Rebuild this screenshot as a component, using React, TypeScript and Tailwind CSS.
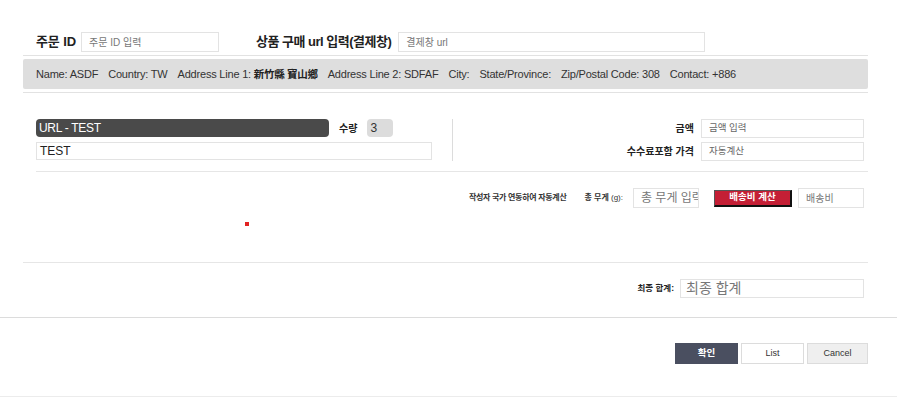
import React from "react";

function Box({ w, h, text, cls = "" }: { w: string; h: string; text?: string; cls?: string }) {
  return (
    <div className={`${w} ${h} border border-[#e3e3e3] bg-white flex items-center ${cls}`}>
      {text}
    </div>
  );
}

export default function App() {
  return (
    <div className="w-[897px] h-[400px] bg-white font-['Liberation_Sans','Noto_Sans_CJK_KR',sans-serif] text-[#222] overflow-hidden">
      <div className="pt-[32px]">
        {/* Top row */}
        <div className="flex items-center pl-[36px] h-[20px]">
          <span className="text-[13px] font-bold tracking-[-0.1px]">주문 ID</span>
          <div className="ml-[5px] w-[138px] h-[20px] border border-[#e3e3e3] flex items-center pl-[7px] text-[10px] text-[#777]">
            주문 ID 입력
          </div>
          <span className="ml-[37px] text-[13px] font-bold tracking-[-0.5px]">상품 구매 url 입력(결제창)</span>
          <div className="ml-[7px] w-[307px] h-[20px] border border-[#e3e3e3] flex items-center pl-[7px] text-[10px] text-[#777]">
            결제창 url
          </div>
        </div>

        <div className="ml-[23px] mr-[29px] mt-[3px] border-t border-[#e2e2e2]" />

        <div className="ml-[23px] mr-[29px] mt-[3px] h-[30px] bg-[#dedede] rounded-[2px] flex items-center pl-[13px] gap-[10px] text-[11px] text-[#333] tracking-[-0.2px]">
          <span>Name: ASDF</span>
          <span>Country: TW</span>
          <span>Address Line 1: <span className="font-bold text-[#222] text-[10.5px] tracking-[-0.3px]">新竹縣 寶山鄉</span></span>
          <span>Address Line 2: SDFAF</span>
          <span>City:</span>
          <span>State/Province:</span>
          <span>Zip/Postal Code: 308</span>
          <span>Contact: +886</span>
        </div>

        <div className="ml-[23px] mr-[29px] mt-[3px] border-t border-[#e2e2e2]" />

        {/* Product section */}
        <div className="ml-[36px] mr-[29px] mt-[26px] flex">
          <div className="w-[396px] flex flex-col">
            <div className="flex items-center h-[18px]">
              <div className="w-[293px] h-[18px] bg-[#4a4a4a] rounded-[4px] text-white text-[12px] flex items-center pl-[3px] tracking-[-0.3px]">
                URL - TEST
              </div>
              <span className="ml-[10px] text-[10px] font-bold">수량</span>
              <div className="ml-[10px] w-[26px] h-[18px] bg-[#dcdcdc] rounded-[4px] flex items-center pl-[3px] text-[12px] text-[#333]">
                3
              </div>
            </div>
            <div className="mt-[5px] h-[18px] w-[396px] border border-[#e3e3e3] flex items-center pl-[3px] text-[12px] text-[#222]">
              TEST
            </div>
          </div>
          <div className="ml-[20px] w-px h-[42px] bg-[#dcdcdc]" />
          <div className="flex-1 flex flex-col items-end pr-[4px] gap-[4px]">
            <div className="flex items-center">
              <span className="text-[10px] font-bold">금액</span>
              <Box w="w-[163px]" h="h-[19px]" text="금액 입력" cls="ml-[7px] pl-[7px] text-[9.5px] text-[#666]" />
            </div>
            <div className="flex items-center">
              <span className="text-[10px] font-bold">수수료포함 가격</span>
              <Box w="w-[163px]" h="h-[19px]" text="자동계산" cls="ml-[7px] pl-[7px] text-[9.5px] text-[#666]" />
            </div>
          </div>
        </div>

        <div className="ml-[36px] mr-[29px] mt-[10px] border-t border-[#e6e6e6]" />

        {/* Shipping row */}
        <div className="mr-[33px] mt-[16px] flex items-center justify-end h-[20px]">
          <span className="text-[8px] font-bold text-[#333] tracking-[-0.3px]">작성자 국가 연동하여 자동계산</span>
          <span className="ml-[18px] text-[8px] font-bold text-[#333]">총 무게 <span className="font-normal">(g):</span></span>
          <div className="ml-[10px] w-[66px] h-[20px] border border-[#e3e3e3] flex items-center pl-[7px] text-[12px] text-[#777] overflow-hidden whitespace-nowrap">
            총 무게 입력
          </div>
          <div className="ml-[15px] w-[78px] h-[17px] bg-[#c41f35] border border-[#555] border-r-[#111] border-b-[#111] border-r-[2px] border-b-[2px] flex items-center justify-center text-white text-[9.5px] font-bold">
            배송비 계산
          </div>
          <div className="ml-[6px] w-[66px] h-[20px] border border-[#e3e3e3] flex items-center pl-[7px] text-[10px] text-[#777]">
            배송비
          </div>
        </div>

        <div className="ml-[245px] mt-[14px] w-[4px] h-[4px] bg-[#e22222]" />

        <div className="ml-[23px] mr-[29px] mt-[36px] border-t border-[#e6e6e6]" />

        {/* Final total */}
        <div className="mr-[33px] mt-[16px] flex items-center justify-end h-[19px]">
          <span className="text-[8.5px] font-bold text-[#222]">최종 합계:</span>
          <div className="ml-[6px] w-[184px] h-[19px] border border-[#e3e3e3] flex items-center pl-[5px] text-[14px] text-[#777]">
            최종 합계
          </div>
        </div>

        <div className="mt-[19px] border-t border-[#dcdcdc]" />

        {/* Buttons */}
        <div className="mr-[29px] mt-[25px] flex justify-end gap-[3px]">
          <div className="w-[63px] h-[21px] bg-[#4a4f60] text-white text-[9.5px] font-bold flex items-center justify-center">
            확인
          </div>
          <div className="w-[63px] h-[21px] bg-white border border-[#dcdcdc] text-[9px] text-[#333] flex items-center justify-center">
            List
          </div>
          <div className="w-[61px] h-[21px] bg-[#efefef] border border-[#dcdcdc] text-[9px] text-[#333] flex items-center justify-center">
            Cancel
          </div>
        </div>

        <div className="mt-[32px] border-t border-[#ececec]" />
      </div>
    </div>
  );
}
